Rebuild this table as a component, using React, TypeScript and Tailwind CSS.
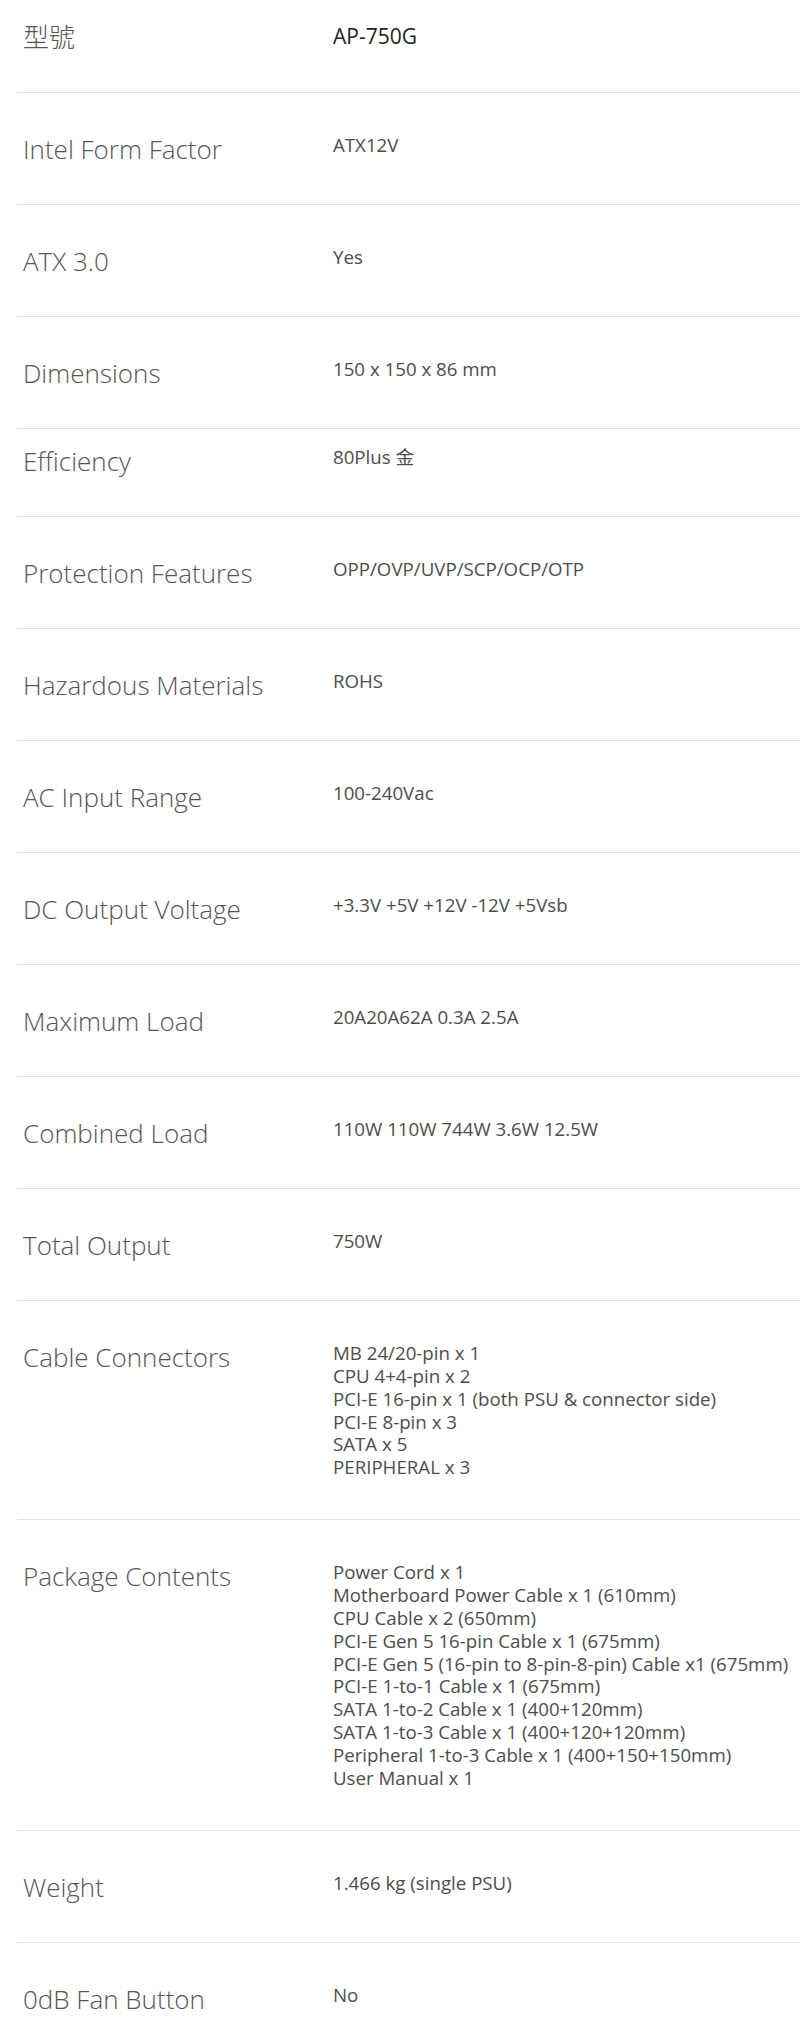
import React from 'react'

type Spec = {
  label: string
  value: string[]
  top?: string
}

const specs: Spec[] = [
  { label: 'Intel Form Factor', value: ['ATX12V'] },
  { label: 'ATX 3.0', value: ['Yes'] },
  { label: 'Dimensions', value: ['150 x 150 x 86 mm'] },
  { label: 'Efficiency', value: ['80Plus 金'], top: 'pt-[17px]' },
  { label: 'Protection Features', value: ['OPP/OVP/UVP/SCP/OCP/OTP'] },
  { label: 'Hazardous Materials', value: ['ROHS'] },
  { label: 'AC Input Range', value: ['100-240Vac'] },
  { label: 'DC Output Voltage', value: ['+3.3V +5V +12V -12V +5Vsb'] },
  { label: 'Maximum Load', value: ['20A20A62A 0.3A 2.5A'] },
  { label: 'Combined Load', value: ['110W 110W 744W 3.6W 12.5W'] },
  { label: 'Total Output', value: ['750W'] },
  {
    label: 'Cable Connectors',
    value: [
      'MB 24/20-pin x 1',
      'CPU 4+4-pin x 2',
      'PCI-E 16-pin x 1 (both PSU & connector side)',
      'PCI-E 8-pin x 3',
      'SATA x 5',
      'PERIPHERAL x 3',
    ],
  },
  {
    label: 'Package Contents',
    value: [
      'Power Cord x 1',
      'Motherboard Power Cable x 1 (610mm)',
      'CPU Cable x 2 (650mm)',
      'PCI-E Gen 5 16-pin Cable x 1 (675mm)',
      'PCI-E Gen 5 (16-pin to 8-pin-8-pin) Cable x1 (675mm)',
      'PCI-E 1-to-1 Cable x 1 (675mm)',
      'SATA 1-to-2 Cable x 1 (400+120mm)',
      'SATA 1-to-3 Cable x 1 (400+120+120mm)',
      'Peripheral 1-to-3 Cable x 1 (400+150+150mm)',
      'User Manual x 1',
    ],
  },
  { label: 'Weight', value: ['1.466 kg (single PSU)'] },
  { label: '0dB Fan Button', value: ['No'] },
]

const font = "font-['Open_Sans','Noto_Sans_CJK_TC',sans-serif]"

export default function App() {
  return (
    <div className={`bg-white min-h-screen ${font} text-[#4d4d4d]`}>
      <div className="ml-[17px]">
        {/* Model row */}
        <div className="grid grid-cols-[316px_1fr] items-start pt-[22px] pb-[40px]">
          <div className="pl-[6px] text-[26px] leading-[30px] font-light text-[#555]">型號</div>
          <div className="text-[21px] leading-[26px] text-[#222] pt-[1px]">AP-750G</div>
        </div>

        {specs.map((spec, i) => (
          <div
            key={spec.label}
            className={`grid grid-cols-[316px_1fr] items-start border-t border-[#e2e2e2] ${spec.top ?? 'pt-[41px]'} ${i === specs.length - 1 ? 'pb-[19px]' : 'pb-[40px]'}`}
          >
            <div className="pl-[6px] text-[26px] leading-[30px] font-light text-[#555]">{spec.label}</div>
            <div className="text-[18.7px] leading-[22.86px]">
              {spec.value.map((line) => (
                <div key={line}>{line}</div>
              ))}
            </div>
          </div>
        ))}
      </div>
    </div>
  )
}
